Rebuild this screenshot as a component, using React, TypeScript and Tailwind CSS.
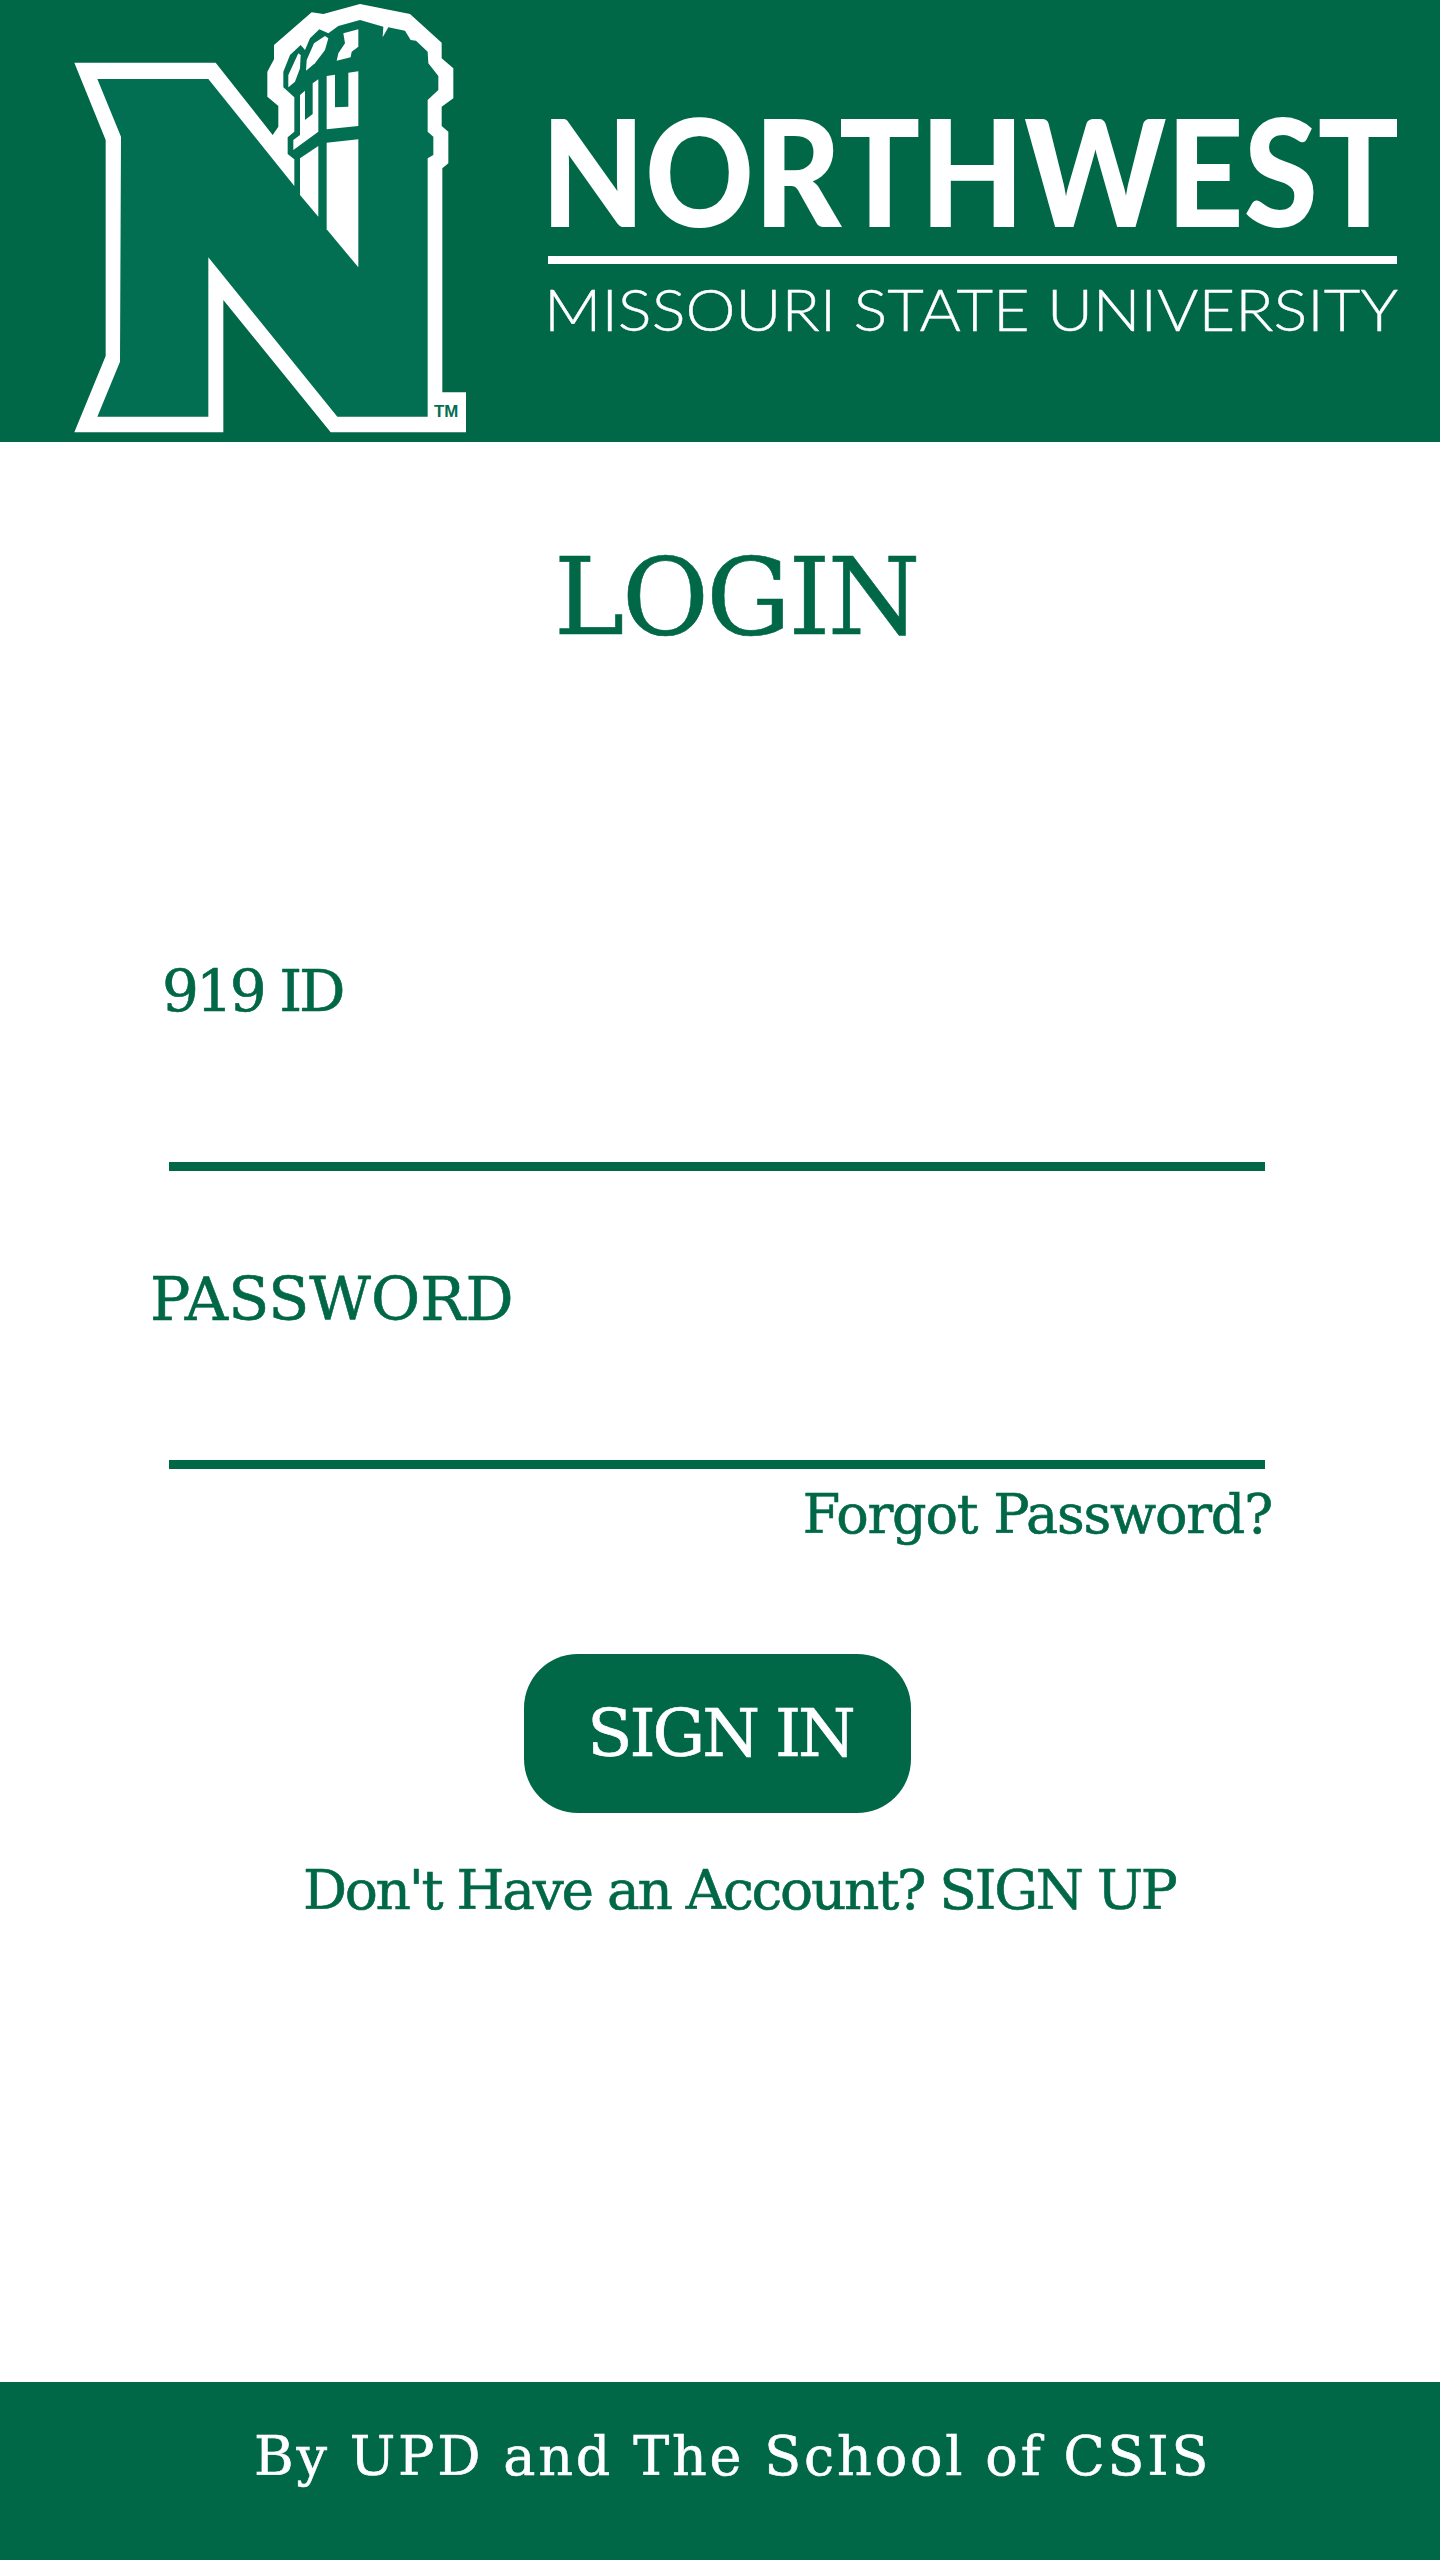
import React from 'react';

const NorthwestMark: React.FC = () => (
  <svg viewBox="90 0 1200 1326" className="w-[400px] h-[442px] shrink-0">
    <polygon
      fill="#ffffff"
      points="103,188 527,188 698,405 715,380 715,318 682,290 682,215 702,178 702,135 815,37 850,42 960,12 1110,42 1205,128 1205,175 1240,205 1240,295 1205,320 1205,378 1225,395 1225,490 1207,505 1207,1177 1278,1177 1278,1297 872,1297 550,900 550,1297 103,1297 197,1068 197,420"
    />
    <polygon
      fill="#036f52"
      points="172,237 505,237 763,558 763,478 743,462 743,412 763,395 763,292 730,262 730,215 750,165 782,135 795,150 810,115 838,88 865,100 895,78 960,60 1030,80 1028,112 1045,82 1095,92 1112,120 1128,122 1163,155 1165,190 1195,228 1195,270 1163,300 1163,395 1180,410 1180,465 1163,475 1163,1250 892,1250 505,772 505,1250 172,1250 240,1085 243,410"
    />
    {/* tower windows */}
    <g fill="#ffffff">
      <polygon points="745,262 745,225 775,160 782,165 780,205 765,245" />
      <polygon points="798,212 800,180 822,130 855,108 865,115 855,150 825,190" />
      <polygon points="890,182 895,160 915,130 910,100 955,88 955,140 935,155 932,172" />
      <polygon points="780,285 795,272 795,360 818,342 818,250 835,238 835,395 760,450 760,420 780,405" />
      <polygon points="860,228 885,224 885,322 925,320 925,218 955,214 955,378 860,388" />
      <polygon points="780,475 835,438 835,650 780,585" />
      <polygon points="860,428 955,418 955,802 860,688" />
    </g>
    <text x="1182" y="1250" fill="#036f52" fontSize="50" fontWeight="700" fontFamily="'Liberation Sans', sans-serif" textLength="73" lengthAdjust="spacingAndGlyphs">
      TM
    </text>
  </svg>
);

const Wordmark: React.FC = () => (
  <svg viewBox="540 0 860 442" className="w-[860px] h-[442px] ml-[70px] shrink-0">
    <text x="541" y="227" fill="#ffffff" fontSize="149" fontWeight="900" fontFamily="Lato, sans-serif" textLength="858" lengthAdjust="spacingAndGlyphs">
      NORTHWEST
    </text>
    <rect x="548" y="256" width="849" height="8" fill="#ffffff" />
    <text x="544" y="331" fill="#ffffff" stroke="#ffffff" strokeWidth="0.4" fontSize="58" fontWeight="300" fontFamily="Lato, sans-serif" textLength="854" lengthAdjust="spacingAndGlyphs">
      MISSOURI STATE UNIVERSITY
    </text>
  </svg>
);

const App: React.FC = () => {
  return (
    <div className="min-h-[2560px] flex flex-col bg-white text-[#006747] font-['DejaVu_Serif',serif] [-webkit-text-stroke:0.6px]">
      {/* Header */}
      <header className="h-[442px] bg-[#006747] flex pl-[70px] overflow-hidden">
        <NorthwestMark />
        <Wordmark />
      </header>

      {/* Login form */}
      <main className="flex-1 flex flex-col">
        <h1 className="mt-[103px] ml-[554px] text-[106px] leading-none font-normal tracking-[-2.5px]">LOGIN</h1>

        <label className="mt-[311px] ml-[162px] text-[58px] leading-none tracking-[-3px]">919 ID</label>
        <input type="text" className="ml-[169px] w-[1096px] h-[151px] border-b-[9px] border-[#006747] outline-none" />

        <label className="mt-[98px] ml-[150px] text-[60px] leading-none">PASSWORD</label>
        <input type="password" className="ml-[169px] w-[1096px] h-[140px] border-b-[9px] border-[#006747] outline-none" />

        <div className="mt-[19px] w-[1272px] flex justify-end">
          <a className="text-[54px] leading-none tracking-[-1.2px]">Forgot Password?</a>
        </div>

        <button className="mt-[112px] ml-[524px] w-[387px] h-[159px] rounded-[54px] bg-[#006747] text-white text-[66px] leading-none tracking-[-3px] pl-[5px]">
          SIGN IN
        </button>

        <p className="mt-[50px] ml-[303px] text-[55px] leading-none tracking-[-2.3px]">Don't Have an Account? SIGN UP</p>
      </main>

      {/* Footer */}
      <footer className="h-[178px] bg-[#006747] pt-[48px] pl-[254px] text-white text-[54px] leading-none tracking-[2.8px]">
        By UPD and The School of CSIS
      </footer>
    </div>
  );
};

export default App;
